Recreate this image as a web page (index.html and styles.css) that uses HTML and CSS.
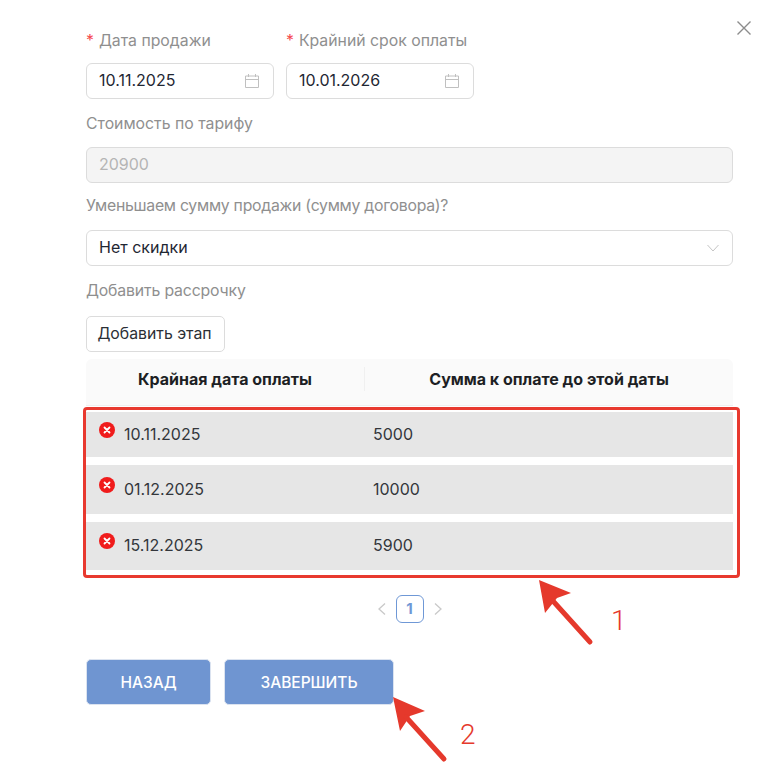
FILE: index.html
```html
<!DOCTYPE html>
<html lang="ru">
  <head>
    <meta charset="UTF-8" />
    <meta name="viewport" content="width=device-width, initial-scale=1.0" />
    <title>Добавить продажу</title>
    <link rel="stylesheet" href="styles.css">
  </head>
  <body>
    <div class="modal">
      <button class="close-btn" type="button" aria-label="Закрыть">
        <svg width="16" height="16" viewBox="0 0 16 16"><path d="M1.5 1.5l13 13M14.5 1.5l-13 13" /></svg>
      </button>

      <div class="date-row">
        <div class="date-field">
          <label class="field-label"><span class="req">*</span>Дата продажи</label>
          <div class="input">
            <span class="input-text">10.11.2025</span>
            <svg class="cal-icon" width="16" height="16" viewBox="0 0 16 16"><path d="M1.5 3h13v11.5h-13zM1.5 6.5h13M4.5 1v3M11.5 1v3" /></svg>
          </div>
        </div>
        <div class="date-field">
          <label class="field-label"><span class="req">*</span>Крайний срок оплаты</label>
          <div class="input">
            <span class="input-text">10.01.2026</span>
            <svg class="cal-icon" width="16" height="16" viewBox="0 0 16 16"><path d="M1.5 3h13v11.5h-13zM1.5 6.5h13M4.5 1v3M11.5 1v3" /></svg>
          </div>
        </div>
      </div>

      <label class="field-label label-tariff">Стоимость по тарифу</label>
      <div class="input input-disabled"><span class="input-text">20900</span></div>

      <label class="field-label label-discount">Уменьшаем сумму продажи (сумму договора)?</label>
      <div class="input select">
        <span class="input-text">Нет скидки</span>
        <svg class="chevron" width="12" height="8" viewBox="0 0 12 8"><path d="M.5 1l5.5 6 5.5-6" /></svg>
      </div>

      <label class="field-label label-plan">Добавить рассрочку</label>
      <button class="add-btn" type="button">Добавить этап</button>

      <div class="table">
        <div class="table-head">
          <div class="th th-date">Крайная дата оплаты</div>
          <div class="th th-sum">Сумма к оплате до этой даты</div>
        </div>
        <div class="table-row row-1">
          <div class="td-date">
            <svg class="del-icon" width="16" height="16" viewBox="0 0 16 16"><circle cx="8" cy="8" r="8" /><path d="M5.5 5.5l5 5M10.5 5.5l-5 5" /></svg>
            <span>10.11.2025</span>
          </div>
          <div class="td-sum">5000</div>
        </div>
        <div class="table-row row-2">
          <div class="td-date">
            <svg class="del-icon" width="16" height="16" viewBox="0 0 16 16"><circle cx="8" cy="8" r="8" /><path d="M5.5 5.5l5 5M10.5 5.5l-5 5" /></svg>
            <span>01.12.2025</span>
          </div>
          <div class="td-sum">10000</div>
        </div>
        <div class="table-row row-3">
          <div class="td-date">
            <svg class="del-icon" width="16" height="16" viewBox="0 0 16 16"><circle cx="8" cy="8" r="8" /><path d="M5.5 5.5l5 5M10.5 5.5l-5 5" /></svg>
            <span>15.12.2025</span>
          </div>
          <div class="td-sum">5900</div>
        </div>
      </div>

      <div class="pagination">
        <svg class="page-arrow" width="10" height="14" viewBox="0 0 10 14"><path d="M8 1.5L2 7l6 5.5" /></svg>
        <span class="page-num">1</span>
        <svg class="page-arrow" width="10" height="14" viewBox="0 0 10 14"><path d="M2 1.5L8 7l-6 5.5" /></svg>
      </div>

      <div class="actions">
        <button class="action-btn btn-back" type="button">НАЗАД</button>
        <button class="action-btn btn-finish" type="button">ЗАВЕРШИТЬ</button>
      </div>
    </div>

    <!-- annotations drawn over the screenshot -->
    <div class="mark-box"></div>
    <svg class="marks" width="772" height="776" viewBox="0 0 772 776">
      <path class="arrow-head" d="M539 580L571 593L557 598L545 613z" />
      <path class="arrow-tail" d="M553 601L590 642" />
      <path class="arrow-head" d="M393 697L425 711L410 716L400 731z" />
      <path class="arrow-tail" d="M406 717L444 759" />
    </svg>
    <span class="mark-num num-1">1</span>
    <span class="mark-num num-2">2</span>
  </body>
</html>
```

FILE: styles.css
```css
html,
body {
  margin: 0;
  height: 776px;
  overflow: hidden;
  background: #ffffff;
}

body {
  position: relative;
  font-family: Inter, "Noto Sans", sans-serif;
  font-size: 16px;
  color: #2b2f36;
}

.modal {
  box-sizing: border-box;
  width: 772px;
  padding: 30px 39px 0 86px;
}

.close-btn {
  position: absolute;
  top: 20px;
  left: 736px;
  padding: 0;
  width: 16px;
  height: 16px;
  border: none;
  background: none;
}

.close-btn svg {
  display: block;
  fill: none;
  stroke: #8c8c8c;
  stroke-width: 1.4;
}

.date-row {
  display: flex;
  gap: 12px;
}

.date-field {
  width: 188px;
}

.field-label {
  display: block;
  height: 20px;
  line-height: 22px;
  font-size: 15.8px;
  color: #8f8f8f;
  white-space: nowrap;
}

.req {
  color: #f5484d;
  margin-right: 5px;
}

.date-field .field-label {
  margin-bottom: 13px;
}

.label-tariff {
  margin-top: 14px;
  margin-bottom: 14px;
}

.label-discount {
  margin-top: 12px;
  margin-bottom: 15px;
  letter-spacing: -0.26px;
}

.label-plan {
  margin-top: 14px;
  margin-bottom: 16px;
  letter-spacing: -0.15px;
}

.input {
  box-sizing: border-box;
  display: flex;
  align-items: center;
  justify-content: space-between;
  height: 36px;
  padding: 0 13px 0 12px;
  border: 1px solid #dcdcdc;
  border-radius: 6px;
  background: #ffffff;
  font-size: 16px;
  color: #1f2733;
}

.input-text {
  margin-top: -2px;
}

.input-disabled {
  background: #f4f4f4;
  color: #b5b5b5;
}

.cal-icon {
  fill: none;
  stroke: #c0c0c0;
  stroke-width: 1;
}

.chevron {
  fill: none;
  stroke: #c4c4c4;
  stroke-width: 1;
}

.add-btn {
  display: block;
  box-sizing: border-box;
  width: 139px;
  height: 36px;
  padding: 0 2px 2px 0;
  border: 1px solid #dcdcdc;
  border-radius: 5px;
  background: #ffffff;
  font-family: inherit;
  font-size: 15.8px;
  color: #2b2f36;
}

.table {
  margin-top: 7px;
}

.table-head {
  display: flex;
  align-items: center;
  height: 47px;
  background: #fafafa;
  border-bottom: 1px solid #efefef;
  box-sizing: border-box;
  border-radius: 6px 6px 0 0;
  margin-bottom: 6px;
}

.th {
  font-size: 16px;
  font-weight: 700;
  color: #1d1f24;
  text-align: center;
  margin-top: -6px;
}

.th-date {
  width: 278px;
  border-right: 1px solid #f0f0f0;
  line-height: 24px;
}

.th-sum {
  flex: 1;
}

.table-row {
  display: flex;
  align-items: center;
  background: #e6e6e6;
  font-size: 16px;
  color: #33363b;
}

.row-1 {
  height: 45px;
}

.row-2 {
  height: 49px;
  margin-top: 8px;
}

.row-3 {
  height: 48px;
  margin-top: 8px;
}

.td-date {
  position: relative;
  width: 287px;
  box-sizing: border-box;
  padding-left: 38px;
}

.td-date span,
.td-sum {
  position: relative;
  top: -1px;
}

.del-icon {
  position: absolute;
  left: 13px;
  top: -3px;
}

.del-icon circle {
  fill: #f01c1c;
}

.del-icon path {
  fill: none;
  stroke: #ffffff;
  stroke-width: 1.8;
  stroke-linecap: round;
}

.pagination {
  display: flex;
  align-items: center;
  justify-content: center;
  gap: 9px;
  margin-top: 25px;
}

.page-arrow {
  fill: none;
  stroke: #c9c9c9;
  stroke-width: 1.3;
}

.page-num {
  box-sizing: border-box;
  width: 28px;
  height: 28px;
  line-height: 26px;
  border: 1px solid #6f98d6;
  border-radius: 6px;
  text-align: center;
  font-size: 15px;
  font-weight: 700;
  color: #6f98d6;
}

.actions {
  display: flex;
  gap: 13px;
  margin-top: 36px;
}

.action-btn {
  height: 46px;
  padding: 0;
  border: 1px solid #dbe3f0;
  border-radius: 5px;
  background: #6f95d1;
  font-family: inherit;
  font-size: 15.5px;
  font-weight: 500;
  color: #ffffff;
}

.btn-back {
  width: 125px;
}

.btn-finish {
  width: 170px;
}

.mark-box {
  position: absolute;
  box-sizing: border-box;
  left: 83px;
  top: 407px;
  width: 657px;
  height: 171px;
  border: 3px solid #e8392f;
  border-radius: 4px;
}

.marks {
  position: absolute;
  left: 0;
  top: 0;
}

.arrow-head {
  fill: #e5392c;
}

.arrow-tail {
  fill: none;
  stroke: #e5392c;
  stroke-width: 5;
  stroke-linecap: round;
}

.mark-num {
  position: absolute;
  font-family: Roboto, "Liberation Sans", sans-serif;
  font-weight: 300;
  font-size: 28px;
  line-height: 32px;
  color: #e5392c;
}

.num-1 {
  left: 611px;
  top: 605px;
}

.num-2 {
  left: 460px;
  top: 719px;
}
```
